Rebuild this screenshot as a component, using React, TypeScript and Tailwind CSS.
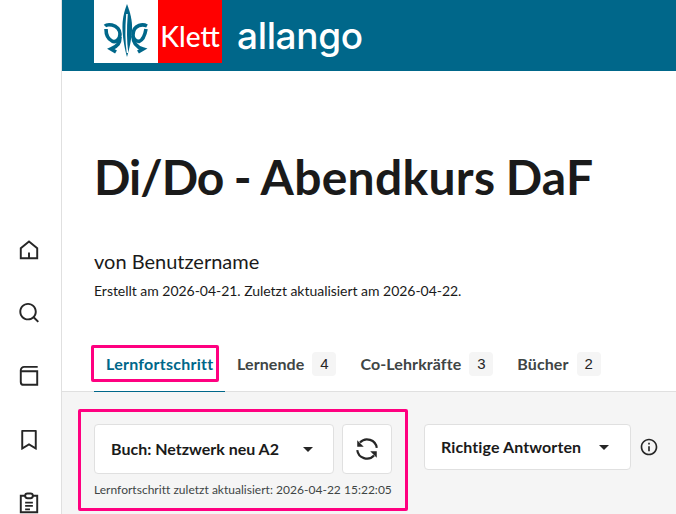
import React from 'react';
import { RiSearchLine, RiBookmarkLine, RiInformationLine } from 'react-icons/ri';

const KlettMark = () => (
  <svg width="64" height="63" viewBox="0 0 64 63" fill="none" stroke="#00678a" strokeWidth="3.6">
    <path d="M33 4 C30 12 28 20 28.5 30 C29 40 31 50 33 57 C35 50 37.5 40 38 30 C38.5 20 36 12 33 4 Z" fill="#00678a" stroke="none" />
    <path d="M33 14 C32 26 32 42 33.5 53" stroke="#ffffff" strokeWidth="1.6" />
    <path d="M11 26 C12 25 15 24.5 18 25 C23 26 26 30 26 34 C26 40 21 43 18 41 C14 39 12 34 12 29" />
    <path d="M26 37 C26 43 24 46 17 49 L22 52" />
    <path d="M53 26 C51 25 48 24.5 45 25.5 C41 27 39 31 39 35 C39 39 42 41 45 41.5 C49 40 51 35 52 29" />
    <path d="M39 36 C39 42 42 47 49 49 L44 52" />
  </svg>
);

const HomeIcon = () => (
  <svg width="24" height="24" viewBox="0 0 24 24" fill="none" stroke="#262626" strokeWidth="2">
    <path d="M3.5 21 H20.5 V10.5 L12 3.5 L3.5 10.5 Z" />
    <path d="M12 15 V21" />
  </svg>
);

const BookIcon = () => (
  <svg width="24" height="24" viewBox="0 0 24 24" fill="none" stroke="#262626" strokeWidth="2">
    <path d="M21 3 H7 A3.5 3.5 0 0 0 3.5 6.5 V18.5 A3 3 0 0 0 6.5 21.5 H20.5 V7.5 H4.5" />
  </svg>
);

const ClipboardIcon = () => (
  <svg width="24" height="24" viewBox="0 0 24 24" fill="none" stroke="#262626" strokeWidth="2">
    <path d="M8 5 H3.5 V22 H20.5 V5 H16" />
    <rect x="8" y="2.5" width="8" height="5" rx="2.5" />
    <path d="M8 12 H16 M8 15.5 H16 M8 19 H13" strokeWidth="1.8" />
  </svg>
);

const SyncIcon = () => (
  <svg width="26" height="26" viewBox="0 0 24 24" fill="none" stroke="#262626" strokeWidth="2">
    <path d="M21 11 A9 9 0 0 0 5.5 6" />
    <path d="M3 13 A9 9 0 0 0 18.5 18" />
    <path d="M3 4 V10 H9 Z M21 20 V14 H15 Z" fill="#262626" stroke="none" />
  </svg>
);

const Caret = () => <span className="w-0 h-0 border-x-[5px] border-x-transparent border-t-[5px] border-t-[#262626]" />;

const Tab = ({ label, count }: { label: string; count: string }) => (
  <div className="flex items-center gap-2">
    <span className="text-[16px] font-bold text-[#404545] tracking-[0.1px]">{label}</span>
    <span className="w-6 h-6 rounded bg-[#f5f5f5] flex items-center justify-center text-[15px] text-[#262626] font-['Liberation_Sans',sans-serif]">{count}</span>
  </div>
);

export default function App() {
  return (
    <div className="w-[676px] h-[514px] overflow-hidden flex bg-white font-['Lato',sans-serif] text-[#1a1a1a]">
      <nav className="w-[62px] shrink-0 border-r border-[#e0e0e0] flex flex-col items-center gap-10 pt-[238px] pr-[4px] text-[#262626]">
        <HomeIcon />
        <RiSearchLine size={24} />
        <BookIcon />
        <RiBookmarkLine size={24} />
        <ClipboardIcon />
      </nav>
      <main className="flex-1 min-w-0">
        <header className="h-[71px] bg-[#00678a] pl-8 flex items-start">
          <div className="w-16 h-[63px] bg-white">
            <KlettMark />
          </div>
          <div className="w-16 h-[63px] bg-[#ff0000] flex items-end justify-center pb-[9px]">
            <span className="text-white text-[28px] leading-[36px] font-medium">Klett</span>
          </div>
          <span className="ml-[15px] mt-[13px] text-white text-[37px] leading-[46px] font-medium font-['Inter',sans-serif] tracking-[-0.35px]">allango</span>
        </header>
        <section className="pl-8 pt-[69px]">
          <h1 className="text-[48px] leading-[74px] font-bold text-[#1a1a1a] whitespace-nowrap [word-spacing:-1.7px] tracking-[0.3px]">
            <span className="tracking-[-1px]">Di/Do</span> - Abendkurs DaF
          </h1>
          <p className="mt-[33px] text-[20px] leading-[28px]">von Benutzername</p>
          <p className="mt-[6px] text-[14px] leading-[20px] tracking-[-0.03px]">Erstellt am 2026-04-21. Zuletzt aktualisiert am 2026-04-22.</p>
        </section>
        <div className="mt-[35px] h-[56px] border-b border-[#e0e0e0] flex items-start pl-8">
          <div className="relative w-[131px] h-[56px] border-b border-[#00678a] -mb-px">
            <div className="absolute left-[-3px] top-[9px] w-[128px] h-[37px] border-[3px] border-[#ff0080] rounded-[2px] flex items-center pl-[12px]">
              <span className="text-[16px] font-bold text-[#00678a] tracking-[0.25px]">Lernfortschritt</span>
            </div>
          </div>
          <div className="flex gap-[24px] pt-[16px] pl-3">
            <Tab label="Lernende" count="4" />
            <Tab label="Co-Lehrkräfte" count="3" />
            <Tab label="Bücher" count="2" />
          </div>
        </div>
        <section className="bg-[#f5f5f5] h-[123px] pl-[16px] pt-[17px] flex items-start">
          <div className="w-[330px] h-[102px] shrink-0 border-[3px] border-[#ff0080] rounded-[2px] pl-[13px] pt-[12px]">
            <div className="flex gap-2">
              <div className="w-[240px] h-[50px] bg-white border border-[#e0e0e0] rounded flex items-center justify-between pl-[16px] pr-[20px]">
                <span className="text-[16px] font-bold">Buch: Netzwerk neu A2</span>
                <Caret />
              </div>
              <div className="w-[50px] h-[50px] bg-white border border-[#e0e0e0] rounded flex items-center justify-center">
                <SyncIcon />
              </div>
            </div>
            <p className="mt-[7px] text-[12px] leading-[18px] text-[#404545] whitespace-nowrap tracking-[0.02px]">Lernfortschritt zuletzt aktualisiert: 2026-04-22 15:22:05</p>
          </div>
          <div className="ml-[16px] mt-[15px] flex items-center gap-[8px]">
            <div className="w-[207px] h-[46px] bg-white border border-[#e0e0e0] rounded flex items-center justify-between pl-[16px] pr-[21px]">
              <span className="text-[16px] font-bold tracking-[0.1px]">Richtige Antworten</span>
              <Caret />
            </div>
            <RiInformationLine size={20} color="#262626" />
          </div>
        </section>
      </main>
    </div>
  );
}
